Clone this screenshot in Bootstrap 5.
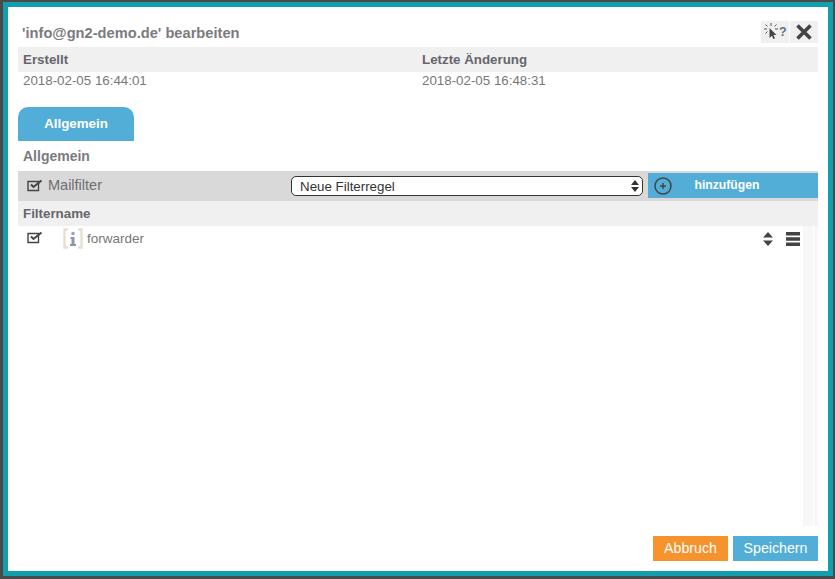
<!DOCTYPE html>
<html lang="de">
<head>
  <meta charset="UTF-8" />
  <meta name="viewport" content="width=device-width, initial-scale=1.0" />
  <title>info@gn2-demo.de bearbeiten</title>
  <link href="https://cdn.jsdelivr.net/npm/bootstrap@5.3.0/dist/css/bootstrap.min.css" rel="stylesheet" />
  <style>
    html, body { height: 100%; }
    body {
      margin: 0;
      padding: 2px 2px 3px 3px;
      background-color: #4a4a4a;
      font-family: "Liberation Sans", Arial, sans-serif;
      font-size: 13.33px;
      color: #77777b;
      overflow: hidden;
    }
    .dlg-frame {
      height: 100%;
      background: #fff;
      border: 5px solid #119fb0;
      padding: 14px 10px 10px;
    }
    .dlg-title { height: 26px; }
    .dlg-title h1 { font-size: 14.67px; font-weight: 700; color: #7b7b7f; margin: 0 0 0 4px; }
    .tool-btn {
      width: 28px; height: 22px; padding: 0; border: 0;
      background: #f0f0f0; display: flex; align-items: center; justify-content: center;
    }
    .help-btn { margin-right: 1px; }
    .info-head { background: #f0f0f0; height: 25px; font-weight: 700; color: #66666c; }
    .info-vals { height: 17px; }
    .cell-created { width: 404px; padding-left: 5px; }
    .tab-strip { margin-top: 18px; height: 34px; }
    .tab-on {
      width: 116px; height: 34px; background: #52aed6; color: #fff; font-weight: 700;
      border-radius: 10px 10px 0 0; padding-bottom: 1px;
    }
    .section-name { height: 30px; padding-left: 5px; font-size: 14px; font-weight: 700; color: #7b7b7f; }
    .filter-bar { height: 30px; background: #d9d9d9; font-size: 14.5px; }
    .filter-label { width: 273px; padding-left: 9px; color: #6e6e72; gap: 5px; }
    .filter-select {
      width: 352px; height: 20px; padding: 0 8px; border: 1px solid #333; border-radius: 5px;
      color: #333; font-size: 13.33px; appearance: none;
      background: #fff url("data:image/svg+xml,%3Csvg xmlns='http://www.w3.org/2000/svg' width='8' height='12'%3E%3Cpath d='M4 0l4 5H0zM4 12l4-5H0z' fill='%23333'/%3E%3C/svg%3E") no-repeat right 3px center;
    }
    .add-btn {
      margin-left: 5px; width: 170px; height: 25px; align-self: flex-start; margin-top: 2px;
      background: #52aed6; color: #fff; font-weight: 700; font-size: 12.2px; border: 0; padding: 0 0 0 6px;
    }
    .add-btn span { width: 72px; margin-left: 19px; }
    .list-head { height: 25px; background: #f0f0f0; padding-left: 5px; font-weight: 700; color: #66666c; }
    .list-wrap { height: 300px; }
    .list-rows { width: 785px; }
    .list-row { height: 25px; padding-left: 9px; }
    .row-name { margin-left: 4px; font-size: 13.5px; padding-top: 1px; }
    .info-ic { margin-left: 20px; }
    .row-tools { margin-right: 3px; gap: 13px; }
    .scroll-a { width: 10px; background: #f7f7f7; }
    .scroll-b { width: 4px; margin-left: 1px; background: #f7f7f7; }
    .dlg-foot { margin-top: 10px; gap: 5px; }
    .foot-btn { height: 25px; border: 0; color: #fff; font-size: 14.2px; padding: 0; border-radius: 0; }
    .btn-abort { width: 75px; background: #f7932c; }
    .btn-save { width: 85px; background: #52aed6; }
  </style>
</head>
<body>
  <div class="dlg-frame d-flex flex-column">
    <div class="dlg-title d-flex align-items-start justify-content-between">
      <h1 class="pt-1">'info@gn2-demo.de' bearbeiten</h1>
      <div class="d-flex">
        <button class="tool-btn help-btn" type="button" aria-label="Hilfe">
          <svg width="24" height="18" viewBox="0 0 24 18">
            <g stroke="#555" stroke-width="1" fill="none">
              <path d="M8 0v3M1 6h3M2.500 1.500l2 2M13.500 1.500l-2 2M12 6h3M2.500 10.500l2-2"/>
            </g>
            <path d="M6.500 5v10l2.300-2.300 1.700 3.300 1.600-.8-1.700-3.200h3.100z" fill="#444"/>
            <text x="16" y="13" font-family="Liberation Sans, sans-serif" font-size="12.500" font-weight="700" fill="#5f6f8c">?</text>
          </svg>
        </button>
        <button class="tool-btn" type="button" aria-label="Schließen">
          <svg width="16" height="16" viewBox="0 0 16 16"><path d="M1.500 1.500l13 13M14.500 1.500l-13 13" stroke="#444" stroke-width="3.600"/></svg>
        </button>
      </div>
    </div>

    <div class="info-head d-flex align-items-center">
      <div class="cell-created">Erstellt</div>
      <div>Letzte Änderung</div>
    </div>
    <div class="info-vals d-flex align-items-center">
      <div class="cell-created">2018-02-05 16:44:01</div>
      <div>2018-02-05 16:48:31</div>
    </div>

    <div class="tab-strip d-flex">
      <div class="tab-on d-flex align-items-center justify-content-center">Allgemein</div>
    </div>
    <div class="section-name d-flex align-items-center">Allgemein</div>

    <div class="filter-bar d-flex align-items-center">
      <div class="filter-label d-flex align-items-center">
        <svg width="16" height="13" viewBox="0 1 16 13"><path d="M1 2.500h10.500v9H1z" fill="none" stroke="#444" stroke-width="1.400"/><path d="M4 5.500l2.500 2.500 8-6.500" fill="none" stroke="#444" stroke-width="2"/></svg>
        <span>Mailfilter</span>
      </div>
      <select class="filter-select" aria-label="Filterregel">
        <option>Neue Filterregel</option>
      </select>
      <button class="add-btn d-flex align-items-center" type="button">
        <svg width="18" height="18" viewBox="0 0 18 18"><circle cx="9" cy="9" r="8" fill="none" stroke="#444" stroke-width="1.500"/><path d="M6 9h6M9 6v6" stroke="#444" stroke-width="1.500"/></svg>
        <span class="text-center">hinzufügen</span>
      </button>
    </div>
    <div class="list-head d-flex align-items-center">Filtername</div>

    <div class="list-wrap d-flex">
      <div class="list-rows">
        <div class="list-row d-flex align-items-center">
          <svg width="16" height="13" viewBox="0 1 16 13"><path d="M1 2.500h10.500v9H1z" fill="none" stroke="#444" stroke-width="1.400"/><path d="M4 5.500l2.500 2.500 8-6.500" fill="none" stroke="#444" stroke-width="2"/></svg>
          <svg class="info-ic" width="20" height="21" viewBox="0 0 20 21">
            <path d="M5 1.500H1.500v18H5M15 1.500h3.500v18H15" fill="none" stroke="#e6e0d2" stroke-width="2.400"/>
            <circle cx="10" cy="5.500" r="1.800" fill="#8ea6c4"/>
            <path d="M7.500 9h4v7h1.500v2H7v-2h1.500v-5h-1z" fill="#8c97a3"/>
          </svg>
          <span class="row-name">forwarder</span>
          <div class="row-tools ms-auto d-flex align-items-center">
            <svg width="10" height="14" viewBox="0 0 10 14"><path d="M5 0l5 5.500H0zM5 14l5-5.500H0z" fill="#444"/></svg>
            <svg width="14" height="14" viewBox="0 0 14 14"><path d="M0 0h14v3.500H0zM0 5.200h14v3.500H0zM0 10.500h14V14H0z" fill="#444"/></svg>
          </div>
        </div>
      </div>
      <div class="scroll-a"></div>
      <div class="scroll-b"></div>
    </div>

    <div class="dlg-foot d-flex justify-content-end">
      <button class="foot-btn btn-abort" type="button">Abbruch</button>
      <button class="foot-btn btn-save" type="button">Speichern</button>
    </div>
  </div>
  <script src="https://cdn.jsdelivr.net/npm/bootstrap@5.3.0/dist/js/bootstrap.bundle.min.js"></script>
</body>
</html>
